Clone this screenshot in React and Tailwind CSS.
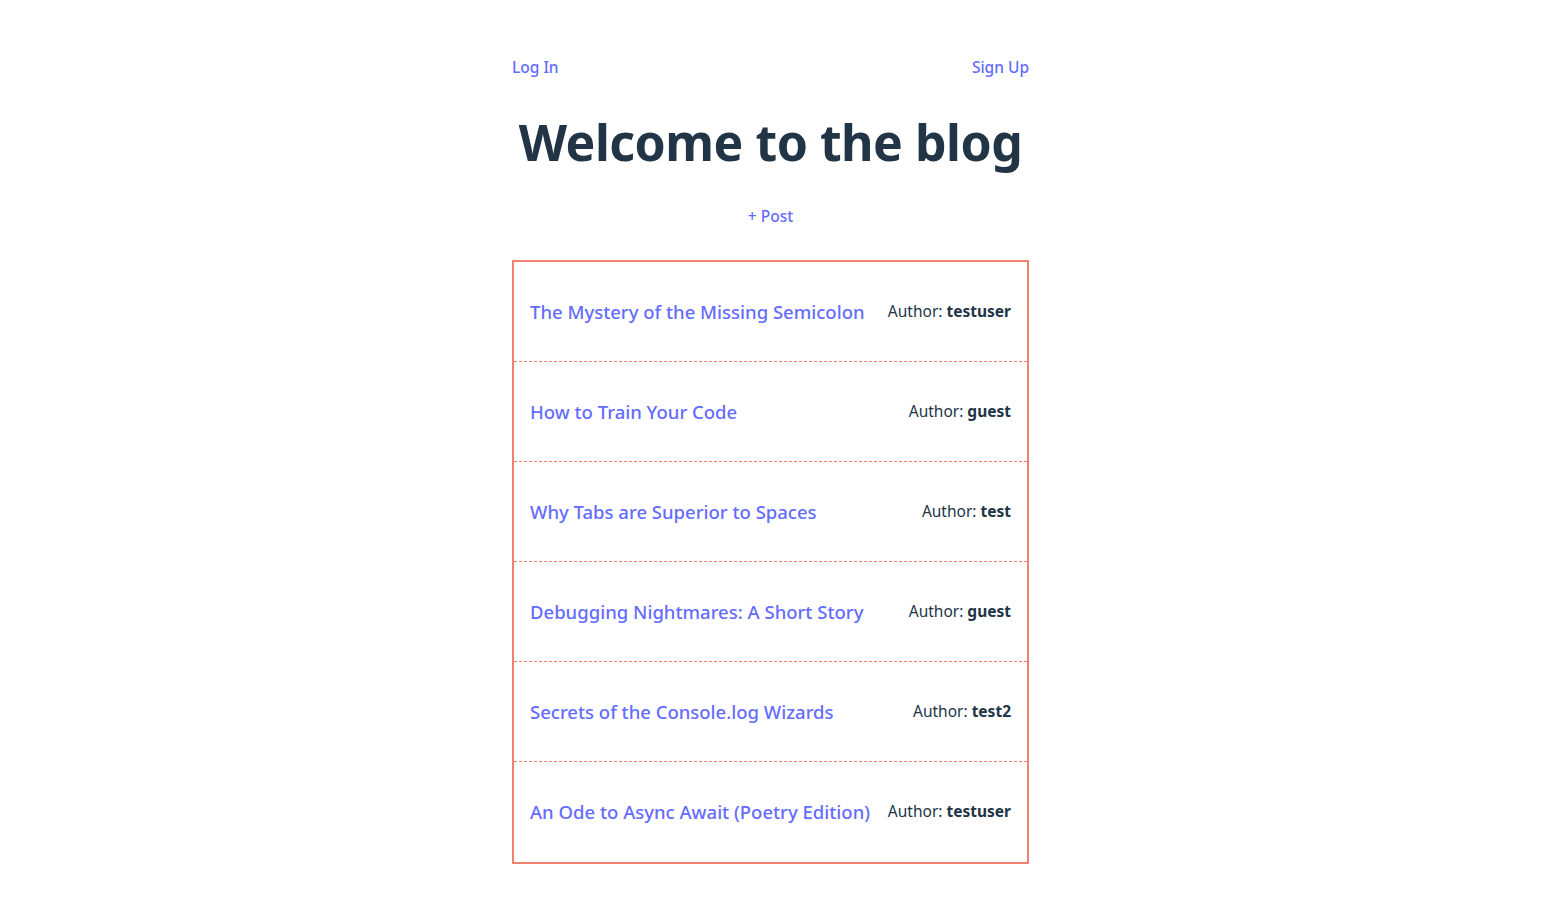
import React from 'react';

const posts = [
    { id: 1, title: 'The Mystery of the Missing Semicolon', author: 'testuser' },
    { id: 2, title: 'How to Train Your Code', author: 'guest' },
    { id: 3, title: 'Why Tabs are Superior to Spaces', author: 'test' },
    { id: 4, title: 'Debugging Nightmares: A Short Story', author: 'guest' },
    { id: 5, title: 'Secrets of the Console.log Wizards', author: 'test2' },
    { id: 6, title: 'An Ode to Async Await (Poetry Edition)', author: 'testuser' },
];

const App = () => {
    return (
        <div className="min-h-screen bg-white font-['Noto_Sans',sans-serif] text-[#213547]">
            <div className="mx-auto w-[517px] pt-[54px]">
                <nav className="flex items-center justify-between text-[15.5px] font-medium leading-[26px] text-[#646cff]">
                    <a href="#">Log In</a>
                    <a href="#">Sign Up</a>
                </nav>

                <h1 className="mt-[32px] text-center text-[50px] font-bold leading-[60px] tracking-[-0.5px]">
                    Welcome to the blog
                </h1>

                <div className="mt-[32px] text-center text-[15.5px] font-medium leading-[24px] text-[#646cff]">
                    <a href="#">+ Post</a>
                </div>

                {/* post list */}
                <ul className="mt-[32px] divide-y divide-dashed divide-[#f08070] border-2 border-solid border-[#f08070]">
                    {posts.map((p) => (
                        <li key={p.id} className="flex h-[100px] items-center justify-between gap-4 px-4">
                            <a href="#" className="text-[18.5px] font-medium text-[#646cff]">{p.title}</a>
                            <span className="shrink-0 text-[15.5px]">
                                Author: <b className="font-bold">{p.author}</b>
                            </span>
                        </li>
                    ))}
                </ul>
            </div>
        </div>
    );
};

export default App;
